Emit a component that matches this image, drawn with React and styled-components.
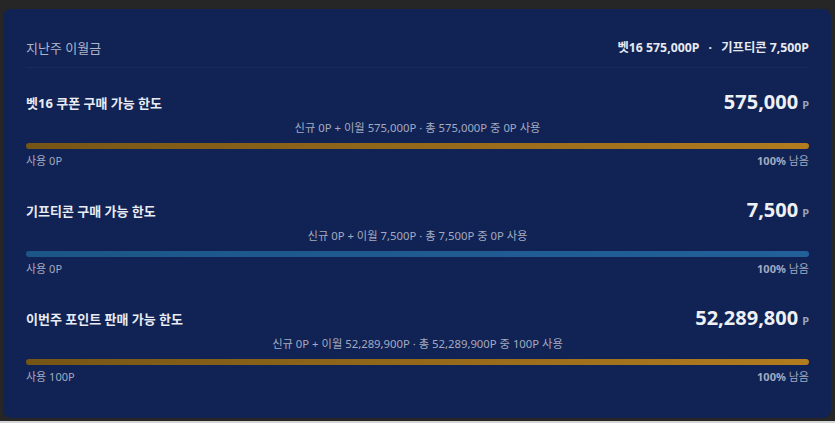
import React from "react";
import styled, { createGlobalStyle } from "styled-components";

const limits = [
	{
		title: "벳16 쿠폰 구매 가능 한도",
		amount: "575,000",
		detail: "신규 0P + 이월 575,000P · 총 575,000P 중 0P 사용",
		used: "사용 0P",
		left: "100%",
		tone: "gold",
	},
	{
		title: "기프티콘 구매 가능 한도",
		amount: "7,500",
		detail: "신규 0P + 이월 7,500P · 총 7,500P 중 0P 사용",
		used: "사용 0P",
		left: "100%",
		tone: "blue",
	},
	{
		title: "이번주 포인트 판매 가능 한도",
		amount: "52,289,800",
		detail: "신규 0P + 이월 52,289,900P · 총 52,289,900P 중 100P 사용",
		used: "사용 100P",
		left: "100%",
		tone: "gold",
	},
];

export default function App() {
	return (
		<>
			<GlobalStyle />
			<Page>
				<Card>
					<Header>
						<HeaderLabel>지난주 이월금</HeaderLabel>
						<HeaderSummary>
							벳16 575,000P <Dot>·</Dot> 기프티콘 7,500P
						</HeaderSummary>
					</Header>
					<Sections>
						{limits.map(item => (
							<Section key={item.title}>
								<TitleRow>
									<Title>{item.title}</Title>
									<Amount>
										{item.amount}
										<Unit>P</Unit>
									</Amount>
								</TitleRow>
								<Detail>{item.detail}</Detail>
								<Bar tone={item.tone} />
								<Legend>
									<span>{item.used}</span>
									<span>
										<strong>{item.left}</strong> 남음
									</span>
								</Legend>
							</Section>
						))}
					</Sections>
				</Card>
				<BottomStrip />
			</Page>
		</>
	);
}

const GlobalStyle = createGlobalStyle`
	html, body {
		margin: 0;
		padding: 0;
		background: #262626;
	}
	body {
		font-family: "Noto Sans", "Noto Sans CJK KR", sans-serif;
	}
`;

const Page = styled.div`
	height: 423px;
	box-sizing: border-box;
	padding: 9px 4px 0 3px;
	display: flex;
	flex-direction: column;
`;

const Card = styled.div`
	height: 409px;
	box-sizing: border-box;
	background: #112254;
	border-radius: 8px;
	padding: 0 22px 0 23px;
`;

const BottomStrip = styled.div`
	margin-top: auto;
	height: 2px;
	margin-left: -3px;
	margin-right: -4px;
	background: #d4d4d4;
`;

// header
const Header = styled.div`
	display: flex;
	justify-content: space-between;
	align-items: center;
	height: 59px;
	box-sizing: border-box;
	padding-top: 19px;
	border-bottom: 1px solid #1a2a5d;
`;

const HeaderLabel = styled.div`
	font-size: 13px;
	line-height: 16px;
	color: #aeb5c9;
`;

const HeaderSummary = styled.div`
	font-size: 12.3px;
	line-height: 16px;
	font-weight: 700;
	color: #e6e9f0;
`;

const Dot = styled.span`
	margin: 0 6px;
`;

// limit sections
const Sections = styled.div`
	display: flex;
	flex-direction: column;
	gap: 31px;
	padding-top: 23px;
`;

const Section = styled.div`
	display: flex;
	flex-direction: column;
`;

const TitleRow = styled.div`
	display: flex;
	justify-content: space-between;
	align-items: center;
	height: 24px;
`;

const Title = styled.div`
	font-size: 13px;
	line-height: 16px;
	font-weight: 700;
	color: #e8ebf2;
`;

const Amount = styled.div`
	font-size: 20px;
	line-height: 24px;
	font-weight: 700;
	color: #eef0f4;
	display: flex;
	align-items: baseline;
`;

const Unit = styled.span`
	font-size: 11px;
	margin-left: 4px;
	color: #9aa1b6;
`;

const Detail = styled.div`
	margin-top: 6px;
	font-size: 11.3px;
	line-height: 14px;
	text-align: center;
	color: #a3abc0;
`;

const Bar = styled.div`
	margin-top: 8px;
	height: 6px;
	border-radius: 3px;
	background: ${p =>
		p.tone === "blue"
			? "linear-gradient(90deg, #1c5688, #22609a)"
			: "linear-gradient(90deg, #755516, #b27c1f)"};
`;

const Legend = styled.div`
	margin-top: 5px;
	display: flex;
	justify-content: space-between;
	font-size: 11px;
	line-height: 14px;
	color: #a3abc0;

	strong {
		font-weight: 700;
	}
`;
